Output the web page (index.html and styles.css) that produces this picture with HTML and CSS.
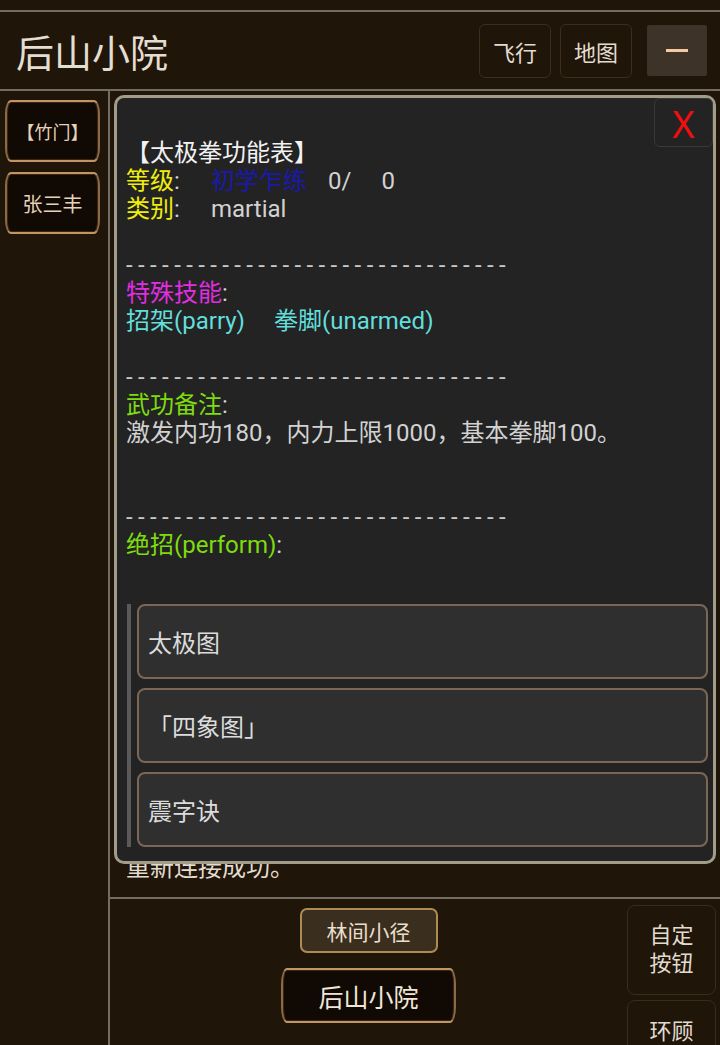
FILE: index.html
```html
<!DOCTYPE html>
<html lang="zh">

<head>
  <meta charset="UTF-8" />
  <meta name="viewport" content="width=device-width, initial-scale=1.0" />
  <title>后山小院</title>
  <link rel="stylesheet" href="styles.css">
</head>

<body>
  <div class="topbar">
    <h1 class="room-title">后山小院</h1>
    <div class="top-actions">
      <button class="top-btn">飞行</button>
      <button class="top-btn">地图</button>
      <button class="menu-btn"><span class="menu-bar"></span></button>
    </div>
  </div>

  <div class="game">
    <div class="side">
      <button class="side-btn small">【竹门】</button>
      <button class="side-btn">张三丰</button>
    </div>

    <div class="main">
      <div class="log">
        <div class="log-line">重新连接成功。</div>
      </div>

      <div class="nav">
        <div class="exits">
          <button class="exit-btn">林间小径</button>
          <button class="here-btn">后山小院</button>
        </div>
        <div class="quick">
          <button class="quick-btn">自定<br>按钮</button>
          <button class="quick-btn short">环顾</button>
        </div>
      </div>

      <!-- skill popup -->
      <div class="skill-panel">
        <button class="close-btn">X</button>
        <div class="skill-text">
          <div class="line title">【太极拳功能表】</div>
          <div class="line"><span class="key"><span class="yellow">等级</span>:</span><span class="blue">初学乍练</span><span class="num1">0/</span><span class="num2">0</span></div>
          <div class="line"><span class="key"><span class="yellow">类别</span>:</span>martial</div>
          <div class="line"></div>
          <div class="line dashes">--------------------------------</div>
          <div class="line"><span class="magenta">特殊技能</span>:</div>
          <div class="line cyan">招架(parry)<span class="gap">拳脚(unarmed)</span></div>
          <div class="line"></div>
          <div class="line dashes">--------------------------------</div>
          <div class="line"><span class="green">武功备注</span>:</div>
          <div class="line">激发内功180，内力上限1000，基本拳脚100。</div>
          <div class="line"></div>
          <div class="line"></div>
          <div class="line dashes">--------------------------------</div>
          <div class="line"><span class="green">绝招(perform)</span>:</div>
        </div>

        <div class="perform-list">
          <button class="perform-btn">太极图</button>
          <button class="perform-btn">「四象图」</button>
          <button class="perform-btn">震字诀</button>
        </div>
      </div>
    </div>
  </div>
</body>

</html>
```

FILE: styles.css
```css
:root {
  --bg-color: #1f1509;
  --line-color: #726c62;
  --text-color: #e2dbd0;
  --gold: #c09668;
  --panel-bg: #232323;
}

* {
  box-sizing: border-box;
}

html,
body {
  margin: 0;
  padding: 0;
  width: 720px;
  height: 1045px;
  overflow: hidden;
  background-color: var(--bg-color);
  font-family: Roboto, 'Noto Sans CJK SC', sans-serif;
  color: var(--text-color);
}

body {
  padding-top: 10px;
  display: flex;
  flex-direction: column;
}

button {
  font-family: inherit;
  color: var(--text-color);
  background: none;
  padding: 0;
  cursor: pointer;
}

/* header */
.topbar {
  height: 81px;
  flex-shrink: 0;
  border-top: 2px solid var(--line-color);
  border-bottom: 2px solid var(--line-color);
  display: flex;
  align-items: center;
  justify-content: space-between;
  padding: 0 13px 0 16px;
}

.room-title {
  margin: 0;
  font-size: 38px;
  font-weight: normal;
  color: #e4ddd2;
}

.top-actions {
  display: flex;
  align-items: center;
}

.top-btn {
  width: 72px;
  height: 54px;
  border: 1px solid #3e2d1c;
  border-radius: 6px;
  font-size: 22px;
  margin-right: 9px;
}

.menu-btn {
  width: 60px;
  height: 51px;
  margin-left: 6px;
  border: none;
  border-radius: 2px;
  background: #3d3328;
  display: flex;
  align-items: center;
  justify-content: center;
}

.menu-bar {
  width: 22px;
  height: 3px;
  background: #f2caa4;
}

/* body */
.game {
  flex: 1;
  display: flex;
  min-height: 0;
}

.side {
  width: 110px;
  flex-shrink: 0;
  border-right: 2px solid var(--line-color);
  padding: 9px 0 0 5px;
  display: flex;
  flex-direction: column;
  gap: 10px;
}

.side-btn {
  width: 95px;
  height: 62px;
  background: #100904;
  border: 2px solid var(--gold);
  border-left-color: #8c6a46;
  border-right-color: #8c6a46;
  border-radius: 6px / 14px;
  box-shadow: inset 0 0 0 1px #3c2612;
  font-size: 20px;
  color: #e6d2b8;
}

.side-btn.small {
  font-size: 18px;
}

.main {
  flex: 1;
  position: relative;
  display: flex;
  flex-direction: column;
}

.log {
  flex: 1;
  display: flex;
  flex-direction: column;
  justify-content: flex-end;
  padding: 0 16px 15px;
}

.log-line {
  font-size: 24px;
  line-height: 28px;
}

.nav {
  height: 148px;
  border-top: 2px solid var(--line-color);
  display: flex;
}

.exits {
  flex: 1;
  display: flex;
  flex-direction: column;
  align-items: center;
  padding-top: 9px;
  gap: 15px;
}

.exit-btn {
  width: 138px;
  height: 45px;
  background: #3a2e1f;
  border: 2px solid #b08a55;
  border-radius: 7px;
  font-size: 21px;
  color: #ebdfcc;
}

.here-btn {
  width: 175px;
  height: 55px;
  background: #110a04;
  border: 2px solid var(--gold);
  border-left-color: #8c6a46;
  border-right-color: #8c6a46;
  border-radius: 6px / 16px;
  box-shadow: inset 0 0 0 1px #3c2612;
  font-size: 25px;
  color: #f0e6d8;
}

.quick {
  width: 89px;
  margin-right: 4px;
  padding-top: 6px;
  display: flex;
  flex-direction: column;
  gap: 5px;
}

.quick-btn {
  height: 90px;
  flex-shrink: 0;
  border: 1px solid #3a2b1b;
  border-radius: 8px;
  font-size: 22px;
  line-height: 28px;
}

.quick-btn.short {
  height: 64px;
}

/* skill popup */
.skill-panel {
  position: absolute;
  top: 4px;
  left: 4px;
  right: 4px;
  height: 769px;
  background: var(--panel-bg);
  border: 3px solid #a29c8a;
  border-radius: 10px;
  padding: 41px 5px 0 9px;
  color: #d2d2d2;
}

.close-btn {
  position: absolute;
  top: 0;
  right: 0;
  width: 59px;
  height: 49px;
  border: 1px solid #3c3833;
  border-radius: 6px;
  background: var(--panel-bg);
  color: #ee1010;
  font-family: 'Noto Sans', sans-serif;
  font-size: 38px;
  line-height: 1;
}

.line {
  font-size: 24px;
  line-height: 28px;
  height: 28px;
  white-space: nowrap;
}

.title {
  color: #f2f2f2;
}

.key {
  display: inline-block;
  width: 85px;
}

.yellow {
  color: #f0ee0c;
}

.blue {
  color: #1a1aaa;
}

.num1 {
  margin-left: 21px;
}

.num2 {
  margin-left: 30px;
}

.magenta {
  color: #e02ee0;
}

.cyan {
  color: #62dedc;
}

.gap {
  margin-left: 29px;
}

.green {
  color: #7edc0e;
}

.dashes {
  color: #c8c8c8;
  letter-spacing: 5.4px;
}

.perform-list {
  margin: 45px 0 0 1px;
  border-left: 4px solid #5a5a5a;
  padding-left: 6px;
  display: flex;
  flex-direction: column;
  gap: 9px;
}

.perform-btn {
  height: 75px;
  background: #2f2f2f;
  border: 2px solid #7c6656;
  border-radius: 8px;
  text-align: left;
  padding-left: 9px;
  font-size: 24px;
  color: #dcdcdc;
}
```
